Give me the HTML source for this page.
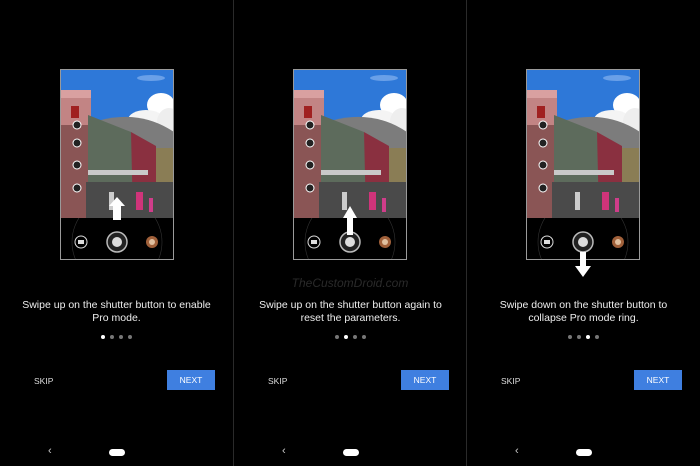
<!DOCTYPE html>
<html><head><meta charset="utf-8"><style>
*{margin:0;padding:0;box-sizing:border-box}
body{width:700px;height:466px;background:#000;position:relative;overflow:hidden;font-family:"Liberation Sans",Arial,sans-serif}
.p{position:absolute;top:0;width:233px;height:466px;background:#000}
.sep{position:absolute;top:0;width:1px;height:466px;background:#2a2a2a}
.fr{position:absolute;left:60px;top:69px;width:114px;height:191px;border:1px solid #9a9a9a;background:#000;overflow:hidden}
.t{position:absolute;left:0;width:233px;top:299px;text-align:center;color:#eee;font-size:10.5px;line-height:13px}
.dots{position:absolute;top:335px;left:101px;height:4px}
.dots i{position:absolute;top:0;width:4px;height:4px;border-radius:50%;background:#777}
.dots i.on{background:#fff}
.skip{position:absolute;left:34px;top:376px;color:#ddd;font-size:8.5px}
.next{position:absolute;left:167px;top:370px;width:48px;height:20px;background:#3f7fe0;color:#fff;font-size:8.5px;text-align:center;line-height:20px}
.back{position:absolute;left:48px;top:445px;color:#ccc;font-size:11px}
.home{position:absolute;left:109px;top:449px;width:16px;height:7px;border-radius:4px;background:#fff}
.wm{position:absolute;left:0;width:700px;top:276px;text-align:center;color:#2a2a2a;font-size:12px;font-style:italic}
</style></head><body>
<svg width="0" height="0" style="position:absolute"><defs>
<clipPath id="bar"><rect x="0" y="148" width="113" height="42"/></clipPath>
<g id="photo">
<rect width="113" height="190" fill="#000"/>
<rect width="113" height="148" fill="#2e78d8"/>
<ellipse cx="90" cy="8" rx="14" ry="3" fill="#6aa0e8"/>
<ellipse cx="100" cy="35" rx="14" ry="12" fill="#fff"/>
<ellipse cx="85" cy="50" rx="18" ry="10" fill="#f4f4f4"/>
<ellipse cx="108" cy="52" rx="12" ry="14" fill="#eee"/>
<path d="M40 50 Q80 40 113 62 L113 110 L40 110Z" fill="#7c7c7c"/>
<rect x="0" y="20" width="30" height="128" fill="#c28484"/>
<rect x="0" y="20" width="30" height="8" fill="#d9a0a0"/>
<rect x="10" y="36" width="8" height="12" fill="#a02020"/>
<rect x="0" y="55" width="28" height="93" fill="#8a5555"/>
<path d="M27 45 L70 62 L75 148 L27 148Z" fill="#5d6b5c"/>
<path d="M70 62 L95 76 L95 148 L72 148Z" fill="#8a3040"/>
<rect x="95" y="78" width="18" height="70" fill="#8a7d55"/>
<rect x="25" y="112" width="88" height="36" fill="#4a4a4a"/>
<rect x="27" y="100" width="60" height="5" fill="#c9c9c9"/>
<rect x="75" y="122" width="7" height="18" fill="#d0347a"/>
<rect x="48" y="122" width="5" height="18" fill="#ccc"/>
<rect x="88" y="128" width="4" height="14" fill="#d03d8a"/>
<g fill="#222" stroke="#fff" stroke-width="1"><circle cx="16" cy="55" r="4"/><circle cx="16" cy="73" r="4"/><circle cx="16" cy="95" r="4"/><circle cx="16" cy="118" r="4"/></g>
<g fill="none" stroke="#333" stroke-width=".6" clip-path="url(#bar)"><circle cx="56" cy="172" r="45"/></g>
<circle cx="20" cy="172" r="6" fill="#000" stroke="#ddd" stroke-width="1"/>
<rect x="17" y="170" width="6" height="4" fill="#ddd"/>
<circle cx="56" cy="172" r="10" fill="#222" stroke="#bbb" stroke-width="1.5"/>
<circle cx="56" cy="172" r="5" fill="#ddd"/>
<circle cx="91" cy="172" r="6" fill="#a0603a"/>
<circle cx="91" cy="172" r="3" fill="#e0c0a0"/>
</g>
</defs></svg>

<div class="p" style="left:0">
 <div class="fr"><svg width="113" height="190"><use href="#photo"/><path d="M52 150 L52 136 L48 136 L56 127 L64 136 L60 136 L60 150Z" fill="#fff"/></svg></div>
 <div class="t">Swipe up on the shutter button to enable<br>Pro mode.</div>
 <div class="dots"><i class="on" style="left:0"></i><i style="left:9px"></i><i style="left:18px"></i><i style="left:27px"></i></div>
 <div class="skip">SKIP</div><div class="next">NEXT</div>
 <div class="back">‹</div><div class="home"></div>
</div>
<div class="sep" style="left:233px"></div>
<div class="p" style="left:234px">
 <div class="fr" style="left:59px"><svg width="113" height="190"><use href="#photo"/><path d="M53 165 L53 148 L49 148 L56 136 L63 148 L59 148 L59 165Z" fill="#fff"/></svg></div>
 <div class="t">Swipe up on the shutter button again to<br>reset the parameters.</div>
 <div class="dots"><i style="left:0"></i><i class="on" style="left:9px"></i><i style="left:18px"></i><i style="left:27px"></i></div>
 <div class="skip">SKIP</div><div class="next">NEXT</div>
 <div class="back">‹</div><div class="home"></div>
</div>
<div class="sep" style="left:466px"></div>
<div class="p" style="left:467px">
 <div class="fr" style="left:59px"><svg width="113" height="190"><use href="#photo"/><path d="M53 182 L53 190 L59 190 L59 182Z" fill="#fff"/></svg></div>
 <svg style="position:absolute;left:60px;top:258px" width="113" height="22"><path d="M53 0 L53 8 L48 8 L56 19 L64 8 L59 8 L59 0Z" fill="#fff"/></svg>
 <div class="t">Swipe down on the shutter button to<br>collapse Pro mode ring.</div>
 <div class="dots"><i style="left:0"></i><i style="left:9px"></i><i class="on" style="left:18px"></i><i style="left:27px"></i></div>
 <div class="skip">SKIP</div><div class="next">NEXT</div>
 <div class="back">‹</div><div class="home"></div>
</div>
<div class="wm">TheCustomDroid.com</div>
</body></html>
